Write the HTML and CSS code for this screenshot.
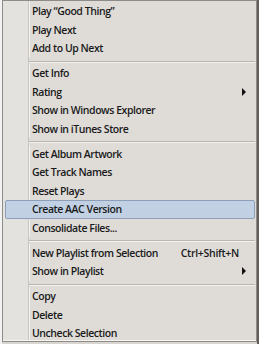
FILE: index.html
```html
<!DOCTYPE html>
<html lang="en">
<head>
    <meta charset="UTF-8">
    <title>Context menu</title>
    <link rel="stylesheet" href="styles.css">
</head>
<body>
    <div class="screen">
        <div class="edge"></div>
        <div class="menu">
            <div class="item">Play “Good Thing”</div>
            <div class="item">Play Next</div>
            <div class="item">Add to Up Next</div>
            <div class="sep"></div>
            <div class="item">Get Info</div>
            <div class="item">Rating <span class="arrow"></span></div>
            <div class="item">Show in Windows Explorer</div>
            <div class="item">Show in iTunes Store</div>
            <div class="sep"></div>
            <div class="item">Get Album Artwork</div>
            <div class="item">Get Track Names</div>
            <div class="item">Reset Plays</div>
            <div class="item active">Create AAC Version</div>
            <div class="item">Consolidate Files...</div>
            <div class="sep"></div>
            <div class="item">New Playlist from Selection <span class="key">Ctrl+Shift+N</span></div>
            <div class="item">Show in Playlist <span class="arrow"></span></div>
            <div class="sep"></div>
            <div class="item">Copy</div>
            <div class="item">Delete</div>
            <div class="item">Uncheck Selection</div>
        </div>
        <div class="side"></div>
    </div>
</body>
</html>
```

FILE: styles.css
```css
body {
    margin: 0;
    background: #d9d6d2;
    font-family: "Open Sans", "Noto Sans", sans-serif;
}
.screen {
    display: flex;
    height: 344px;
    overflow: hidden;
}
.edge {
    width: 2px;
    background: #f2f2f2;
}
.menu {
    width: 253px;
    height: 339px;
    border: 1px solid #8e8c89;
    background: linear-gradient(to right, #e4e2df 0, #e4e2df 25px, #c9c6c2 25px, #c9c6c2 26px, #f4f3f1 26px, #f4f3f1 27px, #dfdcd8 27px);
    padding-top: 1px;
    box-shadow: inset 0 -1px 0 #f6f5f3;
}
.side {
    flex: 1;
    background: #625e5a;
}
.item {
    display: flex;
    align-items: center;
    height: 18.5px;
    margin: 0 1px 0 2px;
    padding-left: 26px;
    padding-right: 8px;
    font-size: 10.5px;
    font-weight: 600;
    letter-spacing: -0.45px;
    color: #1a1a1a;
    white-space: nowrap;
    border: 1px solid transparent;
    border-radius: 2px;
    box-sizing: border-box;
}
.item.active {
    background: #c1d0e3;
    border-color: #8d9fb8;
}
.key {
    margin-left: auto;
    padding-right: 7px;
    letter-spacing: -0.3px;
}
.arrow {
    margin-left: auto;
    width: 0;
    height: 0;
    border-top: 4px solid transparent;
    border-bottom: 4px solid transparent;
    border-left: 4px solid #111;
}
.sep {
    height: 6.5px;
    margin-left: 26px;
    margin-right: 1px;
    background: linear-gradient(#dfdcd8 0, #dfdcd8 3px, #b9b6b2 3px, #b9b6b2 4px, #f3f2f0 4px, #f3f2f0 5px, #dfdcd8 5px);
}
```
